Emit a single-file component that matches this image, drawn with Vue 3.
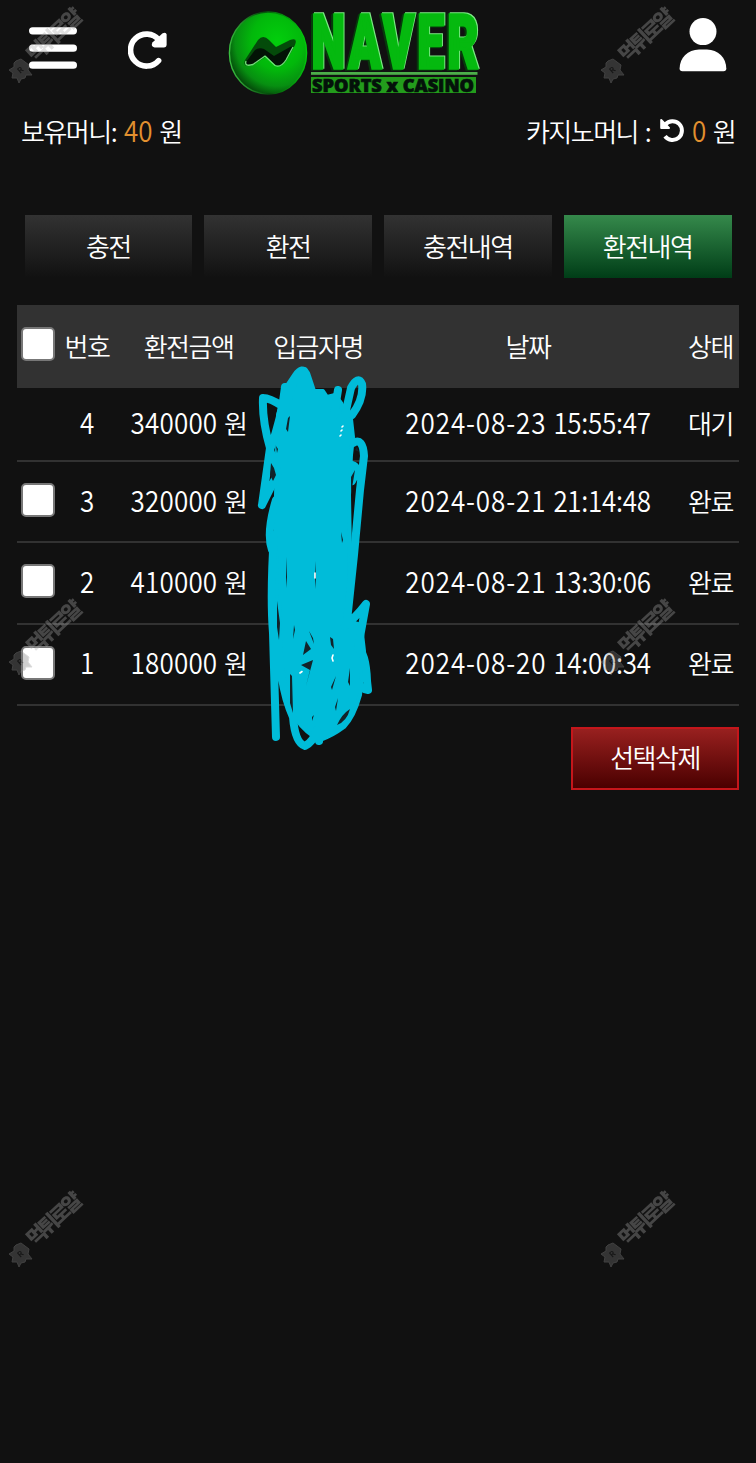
<template>
  <div class="page">
    <header class="top">
      <button class="icon-btn menu" aria-label="menu">
        <svg width="48" height="42" viewBox="0 0 48 42">
          <path d="M3.6 3.8H44.4M3.6 21.2H44.4M3.6 38.2H44.4" class="bar" />
        </svg>
      </button>
      <button class="icon-btn reload" aria-label="reload">
        <svg width="40" height="40" viewBox="0 0 40 40">
          <path d="M30.6 30.6A16 16 0 1 1 30.8 9.8" class="arc" />
          <path d="M38.6 4.6V14.5Q38.6 17.4 35.8 17.4H26.6Q22.4 16.5 24.4 12.6L34.6 3.2Q38.2 1.6 38.6 4.6Z" class="fill" />
        </svg>
      </button>

      <svg class="logo" width="256" height="92" viewBox="0 0 256 92">
        <defs>
          <radialGradient id="ball" cx="0.62" cy="0.36" r="0.68">
            <stop offset="0" stop-color="#02cf0c" />
            <stop offset="0.5" stop-color="#02b80b" />
            <stop offset="0.8" stop-color="#078f11" />
            <stop offset="1" stop-color="#04470a" />
          </radialGradient>
          <linearGradient id="rim" x1="0" y1="0.5" x2="1" y2="0.4">
            <stop offset="0" stop-color="#39bd3f" />
            <stop offset="0.45" stop-color="#064d0c" />
            <stop offset="1" stop-color="#03cc0d" />
          </linearGradient>
        </defs>
        <ellipse cx="41" cy="47" rx="38.6" ry="41" fill="url(#ball)" stroke="url(#rim)" stroke-width="1.4" />
        <path class="mark-shade" d="M18 54 31 34Q36 28 42 34L49 41 63 34Q71 31 68 39L59 55Q55 62 48 57L40 50 26 59Q15 62 18 54Z" />
        <path class="mark" d="M19 56 28 44Q32 41 37 43L47 50 63 41Q68 39 65 44L58 56Q53 63 47 58L39 50 26 59Q17 61 19 56Z" />
        <path class="mark-light" d="M19 55Q17 61 26 58.5L38 50 48 59.5Q54 62 59 54L66 41" />
        <text x="84.5" y="62" textLength="170" lengthAdjust="spacingAndGlyphs" class="naver">NAVER</text>
        <rect x="84" y="66" width="166.5" height="2.8" fill="#4cae4a" />
        <rect x="84" y="71" width="165" height="16" fill="#239c1c" />
        <text x="85" y="85.5" textLength="162" lengthAdjust="spacingAndGlyphs" class="sub">SPORTS x CASINO</text>
      </svg>

      <button class="icon-btn user" aria-label="user">
        <svg width="48" height="54" viewBox="0 0 48 54">
          <circle cx="24" cy="13.6" r="13.5" class="fill" />
          <path d="M20 31.5H28C39 31.5 47.3 40 47.3 50.5Q47.3 53.2 44.5 53.2H3.4Q.6 53.2.6 50.5C.6 40 9 31.5 20 31.5Z" class="fill" />
        </svg>
      </button>
    </header>

    <div class="money">
      <div class="money-item">보유머니: <b class="n">40</b> 원</div>
      <div class="money-item">
        카지노머니 :
        <svg class="undo" width="24" height="24" viewBox="0 0 24 24">
          <path d="M5.4 6.4A9.4 9.4 0 1 1 5 18.2" />
          <path d="M1.2 2V9.9H9Z" class="tip" />
        </svg>
        <b class="n">0</b> 원
      </div>
    </div>

    <nav class="tabs">
      <button v-for="t in tabs" :key="t" class="tab" :class="{ active: t === current }" @click="current = t">
        {{ t }}
      </button>
    </nav>

    <section class="table">
      <div class="row head">
        <span><i class="check" /></span>
        <span v-for="h in heads" :key="h">{{ h }}</span>
      </div>
      <div v-for="r in rows" :key="r.no" class="row" :class="{ wait: !r.done }">
        <span><i v-if="r.done" class="check" /></span>
        <span><em class="n">{{ r.no }}</em></span>
        <span class="amount"><em class="n">{{ r.amount }}</em> 원</span>
        <span></span>
        <span class="date"><em class="n">{{ r.date }}</em><em class="n time">{{ r.time }}</em></span>
        <span>{{ r.done ? '완료' : '대기' }}</span>
      </div>

      <!-- marker scribble over the name column -->
      <svg class="scribble" width="150" height="400" viewBox="0 0 150 400">
        <path
          class="mass"
          d="M46 32 54 20Q62 8 68 18L74 36 83 36 87 42 95 40 101 48 106 58 111 64 113 82 111 100 109 140 110 198 108 266 121 270 124 296 120 340Q114 362 104 372Q92 381 80 385Q66 378 56 364Q46 350 42 330L38 290 36 200 36 140 38 60Z"
        />
        <path d="M23 43Q22 65 30 93L22 150M23 43Q30 43 42 51M45 32Q42 62 30 95L38 118 22 150M36 145Q26 178 32 195M48 45Q54 18 64 16M98 35 94 60M112 60Q124 44 122 29Q118 20 111 33L105 60" />
        <path d="M113 88Q123 82 124 101L120 135 114 200 107 266M112 110Q120 112 112 126M34 180Q30 240 33 278L36 382M38 250Q36 325 53 362Q55 388 65 391Q73 387 77 375L79 386M105 271Q116 262 126 249L118 293Q126 298 127 326L128 335Q121 334 117 327M116 330Q112 355 94 371" />
        <g class="holes">
          <path d="M48 63 50 61 48 77 46 74ZM36 91 38 94 37 98ZM31 108 34 113 36 120 33 126 30 120ZM117 92 119 97 115 95ZM111 122 115 115 111 139ZM101 177 103 185 102 188ZM46 202 47 222 46 233ZM75 206 76 223 75 234ZM37 246 40 268 39 285 37 272ZM54 270 55 275 53 284ZM69 276 73 283 74 289ZM66 286 71 294 63 300ZM90 282 93 284 94 294 91 290ZM61 310 73 305 66 331 70 315ZM50 319 52 321 53 358 50 348ZM110 313 110 331 108 327ZM96 321 92 335 91 332ZM98 343 96 356 95 352ZM72 362 74 360 72 366ZM97 370Q102 359 110 354Q107 366 97 370Z" />
        </g>
        <path class="bits" d="M102 72 103 71M101 76 102 75M100 81 101 80M75 218V223M60 318 62 316.5M93 300 92 303 93 306" />
      </svg>
    </section>

    <div class="actions">
      <button class="delete">선택삭제</button>
    </div>

    <svg class="watermark" width="756" height="1463" viewBox="0 0 756 1463">
      <g v-for="(p, i) in marks" :key="i" :transform="`translate(${p[0]} ${p[1]})`">
        <path class="seal" d="M8 57 13 55 17 58 21 61 20 66 24 71 18 71 17 74 13 75 11 79 9 74 4 74 5 69 1 66 6 63 6 59Z" />
        <text class="seal-r" x="9.5" y="69" transform="rotate(-42 12 66)">R</text>
        <text class="wm-text" x="-33.5" y="7.5" transform="translate(46.5 31) rotate(-43)" textLength="67">먹튀로얄</text>
      </g>
    </svg>
  </div>
</template>

<script setup>
import { ref } from 'vue'

const tabs = ['충전', '환전', '충전내역', '환전내역']
const current = ref('환전내역')

const heads = ['번호', '환전금액', '입금자명', '날짜', '상태']

const rows = [
  { no: 4, amount: '340000', date: '2024-08-23', time: '15:55:47', done: false },
  { no: 3, amount: '320000', date: '2024-08-21', time: '21:14:48', done: true },
  { no: 2, amount: '410000', date: '2024-08-21', time: '13:30:06', done: true },
  { no: 1, amount: '180000', date: '2024-08-20', time: '14:00:34', done: true },
]

const marks = [8, 600].flatMap((x) => [4, 596, 1188].map((y) => [x, y]))
</script>

<style>
body { background: #111; }
</style>

<style scoped>
.page {
  position: relative;
  width: 756px;
  height: 1463px;
  overflow: hidden;
  background: #111;
  color: #fff;
  font-family: "Noto Sans CJK KR", sans-serif;
  font-size: 26px;
  font-weight: 350;
  letter-spacing: -1.5px;
  word-spacing: 2.4px;
  line-height: 38px;
}

button {
  border: 0;
  padding: 0;
  background: none;
  color: inherit;
  font: inherit;
  letter-spacing: inherit;
}

svg { display: block; }

.n {
  display: inline-block;
  font-style: normal;
  font-weight: 350;
  letter-spacing: -0.1px;
  transform: translateY(-1px) scaleY(1.12);
}

.top { display: flex; height: 107px; padding: 0 29px; }
.menu { margin-top: 27px; align-self: flex-start; }
.reload { margin: 30px 0 0 51px; align-self: flex-start; }
.logo { margin: 6px 0 0 59px; }
.user { margin: 18px 0 0 auto; align-self: flex-start; }

.bar { stroke: #fff; stroke-width: 7.2; stroke-linecap: round; }
.arc { fill: none; stroke: #fff; stroke-width: 5.6; stroke-linecap: round; }
.fill { fill: #fff; }

.mark-shade { fill: #044b0a; }
.mark { fill: #031306; }
.mark-light { fill: none; stroke: #6fe276; stroke-width: 1.3; }

.naver {
  font-family: Roboto, "Open Sans", sans-serif;
  font-size: 74px;
  font-weight: 900;
  letter-spacing: 5px;
  fill: #05b90f;
  stroke: #05b90f;
  stroke-width: 3.4;
  filter: drop-shadow(1px -1px 0 #7ce884) drop-shadow(-2px 1px 0 #053b0a);
}

.sub {
  font-family: "Open Sans", sans-serif;
  font-size: 18px;
  font-weight: 800;
  letter-spacing: 0;
  word-spacing: 0;
  fill: #04120a;
  stroke: #04120a;
  stroke-width: 0.7;
}

.money {
  display: flex;
  justify-content: space-between;
  padding: 5px 14px 0 21px;
  height: 93px;
}
.money-item { display: flex; align-items: center; height: 38px; white-space: pre; }
.money .n { margin-right: 0; color: #e2902f; letter-spacing: 0; }
.money-item:first-child .n { margin-left: 1px; }
.undo { margin: -2px 8px 0 3px; fill: none; stroke: #fff; stroke-width: 4; }
.undo .tip { fill: #fff; stroke-width: 2; stroke-linejoin: round; }

.tabs {
  display: grid;
  grid-template-columns: repeat(4, 1fr);
  gap: 12px;
  padding: 10px 24.5px 0;
}
.tab { height: 63px; padding-bottom: 2px; background: linear-gradient(#323232, #111); }
.tab.active { background: linear-gradient(#35894b, #003d17); }

.table { position: relative; margin: 27px 17px 0; }

.row {
  display: grid;
  grid-template-columns: 42px 56px 147px 112px 308px 57px;
  align-items: center;
  height: 81.3px;
  padding-bottom: 2px;
  border-bottom: 2px solid #323232;
  box-sizing: border-box;
  text-align: center;
  white-space: nowrap;
}
.row.head { height: 83px; background: #323232; border: 0; }
.row.wait { height: 74px; }

.check {
  display: block;
  width: 34px;
  height: 34px;
  margin: -1px auto 0 4px;
  box-sizing: border-box;
  border: 2px solid #777;
  border-radius: 5px;
  background: #fff;
}
.head .check { margin-top: -4px; }

.amount .n { letter-spacing: 0.2px; }
.date { display: flex; justify-content: center; gap: 7px; }
.date .n { letter-spacing: 0.9px; }
.date .time { letter-spacing: -0.3px; }

.scribble {
  position: absolute;
  left: 223px;
  top: 50px;
  fill: none;
  stroke: #00bcd9;
  stroke-width: 8;
  stroke-linecap: round;
  stroke-linejoin: round;
}
.scribble .mass { fill: #00bcd9; stroke-width: 4; }
.holes { fill: #12232a; stroke: none; }
.scribble .bits { stroke: #fff; stroke-width: 1.6; }

.actions { display: flex; justify-content: flex-end; padding: 21px 17px 0; }
.delete {
  width: 168px;
  height: 63px;
  padding-bottom: 2px;
  border: 2px solid #c5161b;
  background: linear-gradient(#98201f, #4a0000);
}

.watermark {
  position: absolute;
  left: 0;
  top: 0;
  opacity: 0.35;
  pointer-events: none;
}
.seal { fill: #777; stroke: #999; stroke-width: 1; }
.seal-r { fill: #222; font-size: 8px; font-weight: 700; letter-spacing: 0; }
.wm-text {
  fill: #aaa;
  font-size: 21px;
  font-weight: 900;
  letter-spacing: 0;
}
</style>
